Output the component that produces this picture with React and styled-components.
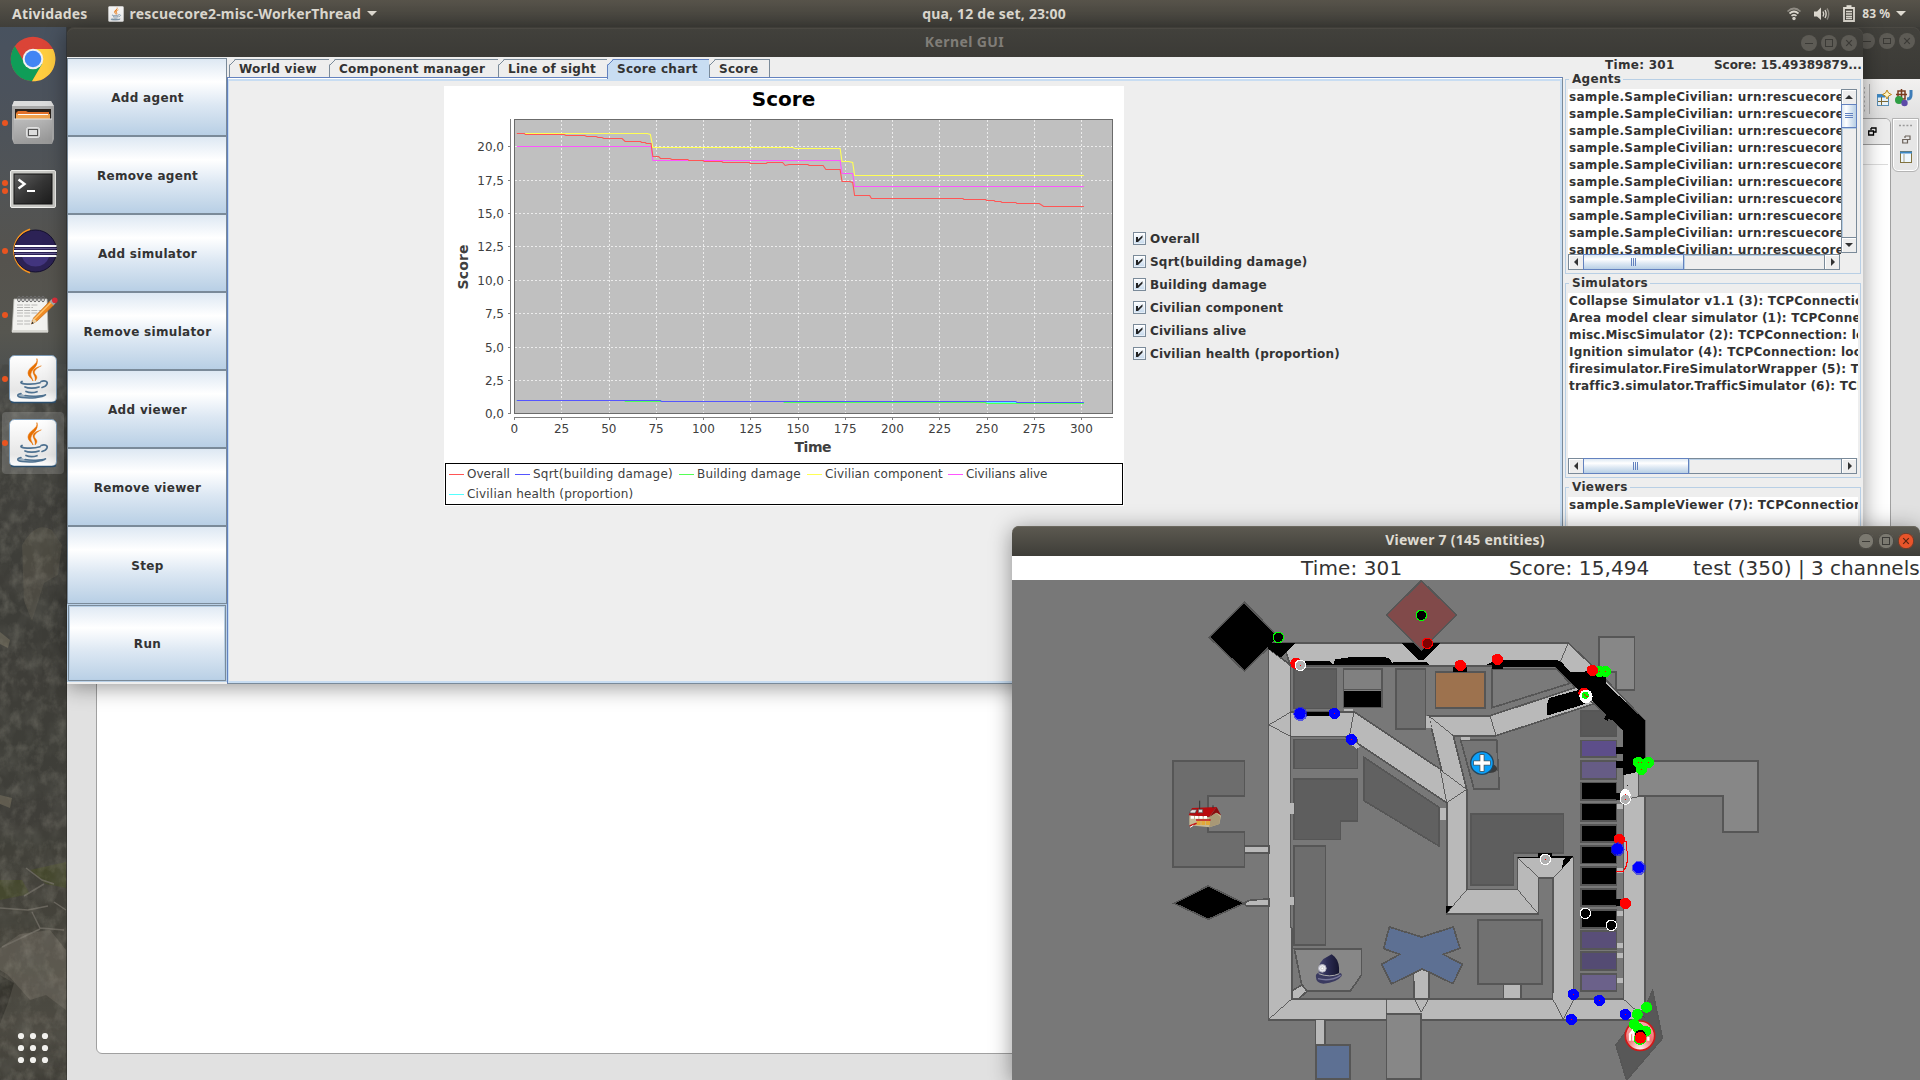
import React from "react";
import styled, { createGlobalStyle, css } from "styled-components";

const Global = createGlobalStyle`
  * { box-sizing: border-box; }
  html, body { margin: 0; padding: 0; overflow: hidden; background: #3c3b37; }
`;

const swing = `"DejaVu Sans", Verdana, sans-serif`;
const shell = `"Noto Sans", "Open Sans", sans-serif`;
const metal = "linear-gradient(180deg, #dde8f3 0%, #ffffff 30%, #dde8f3 60%, #b8cfe5 100%)";
const metalSide = "linear-gradient(90deg, #dde8f3 0%, #ffffff 30%, #dde8f3 60%, #b8cfe5 100%)";

/* ---------- desktop ---------- */
const Desktop = styled.div`
  position: relative;
  width: 1920px;
  height: 1080px;
  overflow: hidden;
  display: flex;
  flex-direction: column;
  font-family: ${swing};
`;
const TopBar = styled.header`
  height: 27px;
  flex: none;
  display: grid;
  grid-template-columns: 1fr auto 1fr;
  align-items: center;
  background: linear-gradient(180deg, #57534a, #403f3a);
  color: #dfdbd2;
  font: 700 14px/27px ${shell};
  padding: 0 14px 2px 12px;
`;
const BarGroup = styled.div`
  display: flex;
  align-items: center;
  justify-content: ${(p) => (p.$end ? "flex-end" : "flex-start")};
`;
const BarText = styled.span`
  white-space: pre;
  letter-spacing: ${(p) => p.$ls ?? 0.2}px;
  margin-left: ${(p) => p.$ml || 0}px;
  font-size: ${(p) => p.$size || 14}px;
`;
const BarIcon = styled.svg`
  display: block;
  margin-left: ${(p) => p.$ml || 0}px;
`;
const Below = styled.div`
  flex: 1;
  display: flex;
`;
const Dock = styled.nav`
  position: relative;
  width: 67px;
  display: flex;
  flex-direction: column;
  background: #3e3d38;
`;
const Wallpaper = styled.svg`
  position: absolute;
  inset: 0;
`;
const DockItem = styled.div`
  position: relative;
  height: 64px;
  &::before {
    content: "";
    position: absolute;
    inset: 1px 3px 1px 2px;
    border-radius: 4px;
    background: ${(p) => (p.$active ? "rgba(255,255,255,.17)" : "transparent")};
  }
  svg { position: relative; display: block; }
`;
const DockSpacer = styled.div`flex: 1;`;
const AppsButton = styled.div`
  position: relative;
  height: 58px;
`;
const Workspace = styled.div`
  position: relative;
  flex: 1;
`;

/* ---------- windows ---------- */
const Window = styled.section`
  position: absolute;
  left: ${(p) => p.$x}px;
  top: ${(p) => p.$y}px;
  width: ${(p) => p.$w}px;
  height: ${(p) => p.$h}px;
  display: flex;
  flex-direction: column;
  border-radius: 7px 7px 0 0;
  box-shadow: ${(p) => (p.$shadow ? "0 3px 22px rgba(0,0,0,.42)" : "none")};
`;
const TitleBar = styled.div`
  height: ${(p) => p.$h}px;
  flex: none;
  display: flex;
  align-items: center;
  justify-content: flex-end;
  position: relative;
  padding-right: ${(p) => p.$pr}px;
  padding-bottom: ${(p) => p.$pb || 0}px;
  gap: 4px;
  border-radius: 7px 7px 0 0;
  background: ${(p) => (p.$focused ? "linear-gradient(180deg,#5d5a51,#3e3d38)" : "linear-gradient(180deg,#42413c,#3b3a36)")};
  box-shadow: inset 0 1px 0 ${(p) => (p.$focused ? "#6a675e" : "#4b4943")};
`;
const TitleText = styled.h1`
  flex: 1;
  margin: 0;
  padding-left: ${(p) => p.$pad}px;
  text-align: center;
  font: 700 14px/28px ${shell};
  padding-bottom: 2px;
  letter-spacing: ${(p) => p.$ls || 0}px;
  color: ${(p) => (p.$focused ? "#dfdbd2" : "#807d78")};
`;

/* ---------- IDE window in the background ---------- */
const IdeBody = styled.div`
  flex: 1;
  display: flex;
  flex-direction: column;
  background: #e1e1e1;
`;
const IdeToolbar = styled.div`
  height: 39px;
  display: flex;
  justify-content: flex-end;
  align-items: center;
  padding: 1px 7px 0 0;
  background: linear-gradient(180deg, #f2f1f0, #e1e1e1);
`;
const IdeRow = styled.div`
  flex: 1;
  display: flex;
  padding: 0 1px 26px 29px;
`;
const Editor = styled.div`
  width: 1795px;
  border: 1px solid #a0a0a0;
  border-radius: 6px;
  background: #fff;
  overflow: hidden;
`;
const EditorTabs = styled.div`
  height: 26px;
  display: flex;
  justify-content: flex-end;
  padding: 8px 13px 0 0;
  border-bottom: 1px solid #a0a0a0;
  background: #ececec;
`;
const EditorRule = styled.div`
  height: 20px;
  margin-right: 2px;
  border-bottom: 1px solid #dcdcdc;
`;
const TrimStack = styled.div`
  width: 27px;
  height: 54px;
  margin-left: 1px;
  border: 1px solid #b4b4b4;
  border-radius: 0 0 6px 6px;
  box-shadow: inset 0 0 0 1px #fff;
  background: #e6e6e6;
`;

/* ---------- kernel window ---------- */
const KernelBody = styled.div`
  flex: 1;
  display: flex;
  background: #eeeeee;
  color: #333333;
  font: 700 12px/17px ${swing};
`;
const ButtonColumn = styled.div`
  width: 160px;
  padding-top: 1px;
  display: flex;
  flex-direction: column;
`;
const SwingButton = styled.button`
  height: 78px;
  padding: 2px 0 0 1px;
  border: 1px solid #7a8a99;
  background: ${metal};
  color: #333;
  font: 700 12px/14px ${swing};
  letter-spacing: 0.32px;
  ${(p) => p.$focus && css`
    border-color: #b8cfe5;
    box-shadow: inset 0 0 0 1px #7a8a99, inset 0 0 0 2px #b8cfe5;
  `}
`;
const TabbedPane = styled.div`
  width: 1336px;
  display: flex;
  flex-direction: column;
`;
const TabStrip = styled.div`
  position: relative;
  z-index: 1;
  height: 20px;
  padding: 2px 0 0 2px;
  display: flex;
`;
const TabCell = styled.div`
  width: ${(p) => p.$w}px;
  height: ${(p) => (p.$on ? 20 : 18)}px;
  padding-left: 9px;
  line-height: 18px;
  letter-spacing: 0.28px;
  white-space: pre;
  border-top: 1px solid ${(p) => (p.$on ? "#6382bf" : "#7a8a99")};
  border-left: 1px solid ${(p) => (p.$on ? "#6382bf" : "#7a8a99")};
  background: linear-gradient(135deg, transparent 3px, ${(p) => (p.$on ? "#6382bf" : "#7a8a99")} 3px 4px, transparent 4px) 0 0 / 6px 6px no-repeat,
    ${(p) => (p.$on ? "#c8ddf2" : "#eeeeee")};
  clip-path: polygon(0 6px, 6px 0, 100% 0, 100% 100%, 0 100%);
  &:last-child { border-right: 1px solid #7a8a99; }
`;
const Pane = styled.div`
  flex: 1;
  display: flex;
  align-items: flex-start;
  border: 1px solid #6382bf;
  border-bottom-color: #7a8a99;
  border-right-color: #7a8a99;
  box-shadow: inset 0 1px 0 #fff, inset 0 3px 0 #c8ddf2, inset 1px 0 0 #c8ddf2, inset -2px -2px 0 #c8ddf2;
  padding: 8px 0 0 216px;
`;
const ChartCard = styled.div`
  width: 680px;
  height: 420px;
  background: #fff;
  display: flex;
  flex-direction: column;
  padding: 0 1px 1px;
`;
const ChartSvg = styled.svg`
  display: block;
  flex: none;
  margin-left: -1px;
`;
const Legend = styled.div`
  height: 42px;
  border: 1px solid #000;
  display: flex;
  flex-wrap: wrap;
  align-content: flex-start;
  padding-left: 3px;
`;
const LegendItem = styled.span`
  display: flex;
  align-items: center;
  width: ${(p) => p.$w}px;
  height: 20px;
  font: 400 12px/20px ${swing};
  letter-spacing: ${(p) => p.$ls}px;
  color: #404040;
  white-space: pre;
  &::before {
    content: "";
    width: 15px;
    height: 1px;
    margin-right: 3px;
    background: ${(p) => p.$c};
  }
`;
const CheckList = styled.div`
  display: flex;
  flex-direction: column;
  padding: 141px 0 0 9px;
`;
const CheckRow = styled.label`
  height: 23px;
  display: flex;
  align-items: center;
  gap: 4px;
  letter-spacing: 0.2px;
`;
const CheckText = styled.span`padding-top: 1px;`;
const CheckBox = styled.span`
  width: 13px;
  height: 13px;
  border: 1px solid #7a8a99;
  background: linear-gradient(180deg, #fff, #c4d8ec);
  box-shadow: inset 0 0 0 1px #fff8;
  svg { display: block; }
`;
const Side = styled.aside`
  width: 300px;
  padding: 0 2px;
  display: flex;
  flex-direction: column;
`;
const StatusRow = styled.div`
  height: 14px;
  display: flex;
  padding-left: 40px;
  line-height: 16px;
`;
const Status = styled.span`
  flex: none;
  width: ${(p) => p.$w}px;
  letter-spacing: ${(p) => p.$ls}px;
  white-space: nowrap;
`;
const Titled = styled.fieldset`
  margin: 0 0 ${(p) => p.$mb || 0}px;
  height: ${(p) => p.$h}px;
  min-width: 0;
  padding: 0 2px;
  border: 1px solid #b8cfe5;
  ${(p) => p.$open && css`border-bottom: 0;`}
`;
const Legendary = styled.legend`
  padding: 0 2px 0 3px;
  margin-left: 1px;
  height: 17px;
  line-height: 17px;
  letter-spacing: 0.3px;
`;
const ScrollGrid = styled.div`
  display: grid;
  grid-template-columns: ${(p) => (p.$v ? "273px 17px" : "290px")};
  grid-template-rows: ${(p) => p.$rows};
  margin-top: 1px;
`;
const List = styled.div`
  background: #fff;
  overflow: hidden;
  padding-left: 1px;
`;
const ListRow = styled.div`
  height: 17px;
  line-height: 17px;
  white-space: pre;
  letter-spacing: ${(p) => p.$ls ?? 0.2}px;
`;
const Bar = styled.div`
  display: flex;
  flex-direction: ${(p) => (p.$v ? "column" : "row")};
  ${(p) => (p.$v ? "width:16px;" : "height:16px;")}
  border: 1px solid #7a8a99;
  background: #eee;
  margin: ${(p) => (p.$v ? "0 0 1px 0" : "0 1px 0 0")};
`;
const ArrowBox = styled.div`
  width: ${(p) => (p.$v || !p.$end ? 14 : 15)}px;
  height: ${(p) => (p.$v && p.$end ? 15 : 14)}px;
  flex: none;
  box-shadow: inset 1px 1px 0 #fff;
  ${(p) => p.$end && (p.$v ? "border-top:1px solid #7a8a99;" : "border-left:1px solid #7a8a99;")}
  display: flex;
  align-items: center;
  justify-content: center;
`;
const Thumb = styled.div`
  flex: none;
  width: ${(p) => (p.$v ? "16px" : p.$len + "px")};
  height: ${(p) => (p.$v ? p.$len + "px" : "16px")};
  margin: ${(p) => (p.$v ? "0 -1px" : "-1px 0")};
  border: 1px solid #6382bf;
  background: ${(p) => (p.$v ? metalSide : metal)};
  display: flex;
  align-items: center;
  justify-content: center;
`;
const Track = styled.div`
  flex: 1;
  box-shadow: inset 1px 1px 0 #b8cfe5;
`;

/* ---------- viewer window ---------- */
const ViewerLabels = styled.div`
  height: 24px;
  flex: none;
  display: flex;
  background: #fff;
  color: #333;
  font: 400 20px/25px ${swing};
  padding-left: 289px;
`;
const ViewerLabel = styled.span`
  width: ${(p) => p.$w}px;
  flex: none;
  white-space: pre;
  letter-spacing: ${(p) => p.$ls || 0}px;
`;
const MapSvg = styled.svg`
  display: block;
  flex: none;
  background: #787878;
`;

/* ---------- window controls ---------- */
function Control({ kind, tone }) {
  const fill = tone === "close" ? "#e9542a" : tone === "live" ? "#7b7970" : "#5d5b55";
  const ink = tone === "close" ? "#5a2412" : "#3b3a36";
  return (
    <svg width="16" height="16" viewBox="0 0 16 16">
      <circle cx="8" cy="8" r="8" fill={fill} />
      {tone !== undefined && <circle cx="8" cy="8" r="7.7" fill="none" stroke="#33322e" strokeWidth=".7" />}
      {kind === "min" && <path d="M4 8.5H12" stroke={ink} strokeWidth="1" />}
      {kind === "max" && <rect x="4.5" y="4.5" width="7" height="7" fill="none" stroke={ink} />}
      {kind === "wide" && <rect x="4.5" y="5.5" width="7" height="5" fill="none" stroke={ink} />}
      {kind === "close" && <path d="M5.2 5.2L10.8 10.8M10.8 5.2L5.2 10.8" stroke={ink} strokeWidth="1.2" />}
    </svg>
  );
}

/* ---------- dock icons ---------- */
const dot = (y) => <circle key={y} cx="5" cy={y} r="3" fill="#e95420" />;
const Slot = ({ dots = [], children }) => (
  <svg width="67" height="64" viewBox="0 0 67 64">
    {dots.map(dot)}
    {children}
  </svg>
);
const JavaCup = () => (
  <g fill="none" strokeLinecap="round">
    <path d="M37 12c2 5-9 8-9 14 0 4 4 5 5 8-1-4-3-5-2-8 1-4 8-7 6-14z" fill="#e76f00" stroke="#e76f00" strokeWidth=".6" />
    <path d="M41 19c-4 1-8 3-8 6 0 3 3 4 2 9 3-3 2-5 0-7-2-3 2-6 6-8z" fill="#e76f00" stroke="#e76f00" strokeWidth=".4" />
    <path d="M22 34.500c-2 1-1 2 2 2.300 6 .7 12 .3 16-1M25 40c3 1.500 10 1.500 14 0M26 44.500c3 1.300 8 1.300 11 .2M41 34.500c4-1.500 7 0 6 2.500-.7 2-3 3-5 3.500" stroke="#4e7190" strokeWidth="1.700" />
    <path d="M21 46.500c-5 1-4 3.500 1 4 8 1 20 .5 24-3-1 1-12 2.500-21 1" stroke="#4e7190" strokeWidth="1.500" fill="#4e7190" fillOpacity=".5" />
  </g>
);
const JavaTile = () => (
  <Slot dots={[32]}>
    <rect x="9.500" y="8.500" width="47" height="47" rx="5" fill="url(#tile)" stroke="#7d9cb8" />
    <path d="M11 54.500q.8 1 3 1h38q3 0 4-1" stroke="#2c4f6e" fill="none" strokeWidth="1.300" />
    <defs>
      <linearGradient id="tile" x1="0" y1="0" x2="0" y2="1">
        <stop offset="0" stopColor="#fff" />
        <stop offset=".75" stopColor="#e6e6e6" />
        <stop offset="1" stopColor="#fff" />
      </linearGradient>
    </defs>
    <JavaCup />
  </Slot>
);
const Chrome = () => (
  <Slot>
    <circle cx="33" cy="32" r="22.300" fill="#db4437" />
    <path d="M33 32L14.800 19A22.300 22.300 0 0 0 32 54.300L43 37z" fill="#0f9d58" />
    <path d="M33 22H53A22.300 22.300 0 0 1 32 54.300L42 37z" fill="#ffcd40" />
    <path d="M14.800 19L24 35 33 22z" fill="#db4437" />
    <circle cx="33" cy="32" r="10.300" fill="#f1f1f1" />
    <circle cx="33" cy="32" r="8.300" fill="#4285f4" />
  </Slot>
);
const Files = () => (
  <Slot dots={[32]}>
    <path d="M14 10h37l3 5v33l-2 5H14l-2-5V15z" fill="#a9a9a9" />
    <path d="M14 10h37l3 5H12z" fill="#dcdcdc" />
    <rect x="15" y="18" width="36" height="12" fill="#2b221c" />
    <path d="M16 22l2-2h8l2 1h21v8H16z" fill="#e2712a" />
    <path d="M16 23h34v5H16z" fill="#f0a24e" />
    <path d="M18 23.500h30" stroke="#fff" />
    <path d="M14 28h38v25H14z" fill="url(#cab)" />
    <path d="M14 28h38" stroke="#e4e4e4" />
    <rect x="26.500" y="36.500" width="13" height="10" rx="2" fill="#c9c9c9" stroke="#e2e2e2" />
    <rect x="28.500" y="38.500" width="9" height="6" fill="#ddd" stroke="#555" />
    <defs>
      <linearGradient id="cab" x1="0" y1="0" x2=".3" y2="1">
        <stop offset="0" stopColor="#bcbcbc" />
        <stop offset="1" stopColor="#9a9a9a" />
      </linearGradient>
    </defs>
  </Slot>
);
const Terminal = () => (
  <Slot dots={[28, 36]}>
    <rect x="10.500" y="15.500" width="45" height="37" rx="1.500" fill="#c9c9c5" stroke="#efefec" />
    <rect x="14" y="19" width="38" height="30" fill="url(#crt)" stroke="#151515" />
    <path d="M18.500 24.500l6 4.500-6 4.500" stroke="#fff" strokeWidth="2.400" fill="none" />
    <path d="M27 36h8" stroke="#fff" strokeWidth="2" />
    <defs>
      <linearGradient id="crt" x1="0" y1="0" x2="1" y2="1">
        <stop offset="0" stopColor="#5e5e5e" />
        <stop offset=".5" stopColor="#363636" />
        <stop offset="1" stopColor="#1c1c1c" />
      </linearGradient>
    </defs>
  </Slot>
);
const Eclipse = () => (
  <Slot dots={[32]}>
    <path d="M30 10.500A22.500 22.500 0 0 0 30 53.500 25 25 0 0 1 30 10.500z" fill="#f7941e" stroke="#f7941e" strokeWidth="2" />
    <circle cx="35.500" cy="32" r="21" fill="#2c2255" stroke="#15102f" />
    <path d="M22 38h27a14 13 0 0 1-27 0z" fill="#42357e" />
    <path d="M15 27H56.500M14 32H57M15 37H56.500" stroke="#fff" strokeWidth="2" />
    <path d="M14 29.500H57M14 34.500H57" stroke="#7a70a8" strokeWidth=".7" />
  </Slot>
);
const Notes = () => (
  <Slot dots={[32]}>
    <path d="M14 16h33l1 33H12z" fill="#f3f3f0" stroke="#b9b9b4" strokeWidth=".8" />
    <path d="M12 47h36v2.500H12z" fill="#d8d8d2" />
    {[0, 1, 2, 3, 4, 5, 6].map((i) => (
      <ellipse key={i} cx={19 + i * 4} cy="16" rx="1.400" ry="2.900" fill="none" stroke="#6d6d6d" strokeWidth="1" />
    ))}
    <path d="M17 22h21M17 24.500h16M17 27.500h24M17 30h22M17 33h14M17 38h20M17 41h14" stroke="#b8b8b6" strokeWidth="1" strokeDasharray="6 1.200" />
    <path d="M31.500 41l2-6L50 18l4 4-17 16z" fill="#f08b24" stroke="#b9600e" strokeWidth=".6" />
    <path d="M34 36.500L51 19.500" stroke="#ffc46b" strokeWidth="1.400" />
    <path d="M31.500 41l2-5.500 3.500 2.700z" fill="#e9d1a4" />
    <path d="M31.300 41.300l1-2.500 1.500 1.500z" fill="#222" />
    <path d="M49.500 18.500l2-2.200 4 4-2 2.200z" fill="#aaa" />
    <circle cx="54.800" cy="17.300" r="2.800" fill="#de2f3c" />
  </Slot>
);
const Apps = () => (
  <svg width="67" height="58" viewBox="0 0 67 58">
    {[14, 26, 38].map((y) => [21, 33, 45].map((x) => <circle key={x + "-" + y} cx={x} cy={y} r="3.100" fill="#f2f1ee" />))}
  </svg>
);
const Rocks = () => (
  <Wallpaper width="67" height="1053" viewBox="0 27 67 1053">
    <defs>
      <linearGradient id="sky" x1="0" y1="0" x2="0" y2="1">
        <stop offset="0" stopColor="#48525f" />
        <stop offset=".06" stopColor="#4b525c" />
        <stop offset=".15" stopColor="#515456" />
        <stop offset=".22" stopColor="#55534e" />
        <stop offset=".29" stopColor="#565650" />
        <stop offset=".33" stopColor="#4d504f" />
        <stop offset=".38" stopColor="#43433f" />
        <stop offset=".55" stopColor="#3d3c37" />
        <stop offset=".75" stopColor="#403f39" />
        <stop offset=".85" stopColor="#49463c" />
        <stop offset=".95" stopColor="#565248" />
        <stop offset="1" stopColor="#423f37" />
      </linearGradient>
      <filter id="grain" x="0" y="0" width="1" height="1">
        <feTurbulence type="fractalNoise" baseFrequency="0.09 0.07" numOctaves="4" seed="8" />
        <feColorMatrix values="0 0 0 0 .5  0 0 0 0 .48  0 0 0 0 .4  1.900 0 0 0 -.85" />
      </filter>
      <filter id="shade" x="0" y="0" width="1" height="1">
        <feTurbulence type="fractalNoise" baseFrequency="0.06 0.04" numOctaves="4" seed="3" />
        <feColorMatrix values="0 0 0 0 .13  0 0 0 0 .13  0 0 0 0 .11  0 2 0 0 -.8" />
      </filter>
    </defs>
    <rect y="27" width="67" height="1053" fill="url(#sky)" />
    <path d="M0 364L28 366 42 380 52 374 67 390V1080H0z" fill="#3f3e39" opacity=".4" />
    <path d="M22 545q14-25 30-15l10 15-4 30-14 8-12 38-8-20z" fill="#5a564b" opacity=".55" />
    <path d="M0 632l10 8-2 8-8-4zM0 795l12 3-2 10-10-4z" fill="#77705e" opacity=".6" />
    <path d="M0 880h22l8 14-30 6zM30 870l36-8v26l-20-4z" fill="#474d26" opacity=".6" />
    <path d="M0 948l20-14 30-4 16 20v60l-20-15-16 5L8 975l-8-5z" fill="#6a665b" opacity=".6" />
    <path d="M26 868l16 12 12 4M24 896l20-12M0 908l28 2 20-4M32 912l8 16 24 2M54 902l12 8M2 947l38-18" stroke="#77746b" strokeWidth="1.500" fill="none" opacity=".7" />
    <path d="M0 975l14 8-6 20L0 1024z" fill="#2d2c27" opacity=".7" />
    <rect y="364" width="67" height="716" filter="url(#grain)" opacity=".26" />
    <rect y="364" width="67" height="716" filter="url(#shade)" opacity=".35" />
    <path d="M66.500 27V1080" stroke="#2e2d29" opacity=".5" />
  </Wallpaper>
);

/* ---------- scrollbars ---------- */
const tri = { up: "M0 6h8L4 2z", down: "M0 2h8L4 6z", left: "M6 0v8L2 4z", right: "M3 0v8l4-4z" };
const Arrow = ({ dir }) => (
  <svg width="8" height="8" viewBox="0 0 8 8"><path d={tri[dir]} fill="#333" /></svg>
);
function ScrollBar({ v, len }) {
  return (
    <Bar $v={v}>
      <ArrowBox $v={v}><Arrow dir={v ? "up" : "left"} /></ArrowBox>
      <Thumb $v={v} $len={len}>
        <svg width="8" height="8" viewBox="0 0 8 8" shapeRendering="crispEdges">
          <path d={v ? "M0 1.500h8M0 3.500h8M0 5.500h8" : "M1.500 0v8M3.500 0v8M5.500 0v8"} stroke="#6382bf" />
        </svg>
      </Thumb>
      <Track />
      <ArrowBox $v={v} $end><Arrow dir={v ? "down" : "right"} /></ArrowBox>
    </Bar>
  );
}

/* ---------- chart ---------- */
const px = (t) => 70.3 + t * 1.8905;
const steps = {
  alive: [[1, 146], [72, 146], [73, 160], [172, 160], [173, 173], [178.7, 173], [179.7, 186], [301, 186]],
  component: [[1, 133], [70, 133], [71.700, 134], [73, 147], [147, 147], [148, 148], [172, 148], [173, 161], [176.500, 161], [178.700, 162], [179.700, 175], [301, 175]],
  overall: [[1, 133], [5, 133], [5.500, 134], [26, 134], [27, 135], [37, 135], [38, 136], [43, 136], [44, 137], [46, 137], [47, 138], [56.700, 138], [58.300, 141], [66.500, 141], [67, 142], [69, 142], [69.500, 143], [72, 143], [73, 156], [76, 156], [77, 158], [82, 158], [83, 159], [91.500, 159], [92, 160], [99.500, 160], [100, 161], [109.500, 161], [110, 162], [124, 162], [124.500, 163], [133, 163], [133.500, 162], [141.600, 162], [143, 165], [145, 164], [155, 164], [155.600, 165], [163, 165], [164.500, 169], [172, 169], [173, 181], [177, 181], [178.700, 182], [179.700, 195], [187.700, 195], [188.600, 198], [237, 198], [237.500, 199], [249, 199], [249.500, 200], [253.500, 200], [254, 201], [257, 201], [257.600, 202], [265, 202], [265.500, 203], [277.400, 203], [279.700, 206], [301, 206]],
  health: [[1, 400], [77, 400], [77.500, 401], [249, 401], [250, 402], [301, 402]],
  building: [[1, 400], [58, 400], [58.500, 401], [142, 401], [142.500, 402], [249, 402], [249.500, 403], [301, 403]],
  sqrt: [[1, 400], [77, 400], [77.500, 401], [265, 401], [265.500, 402], [301, 402]],
};
const toPoints = (s) => s.map(([t, y]) => `${(px(t) + 0.6).toFixed(1)},${y - 86 + 0.5}`).join(" ");
const yTicks = [["20,0", 146], ["17,5", 180], ["15,0", 213], ["12,5", 246], ["10,0", 280], ["7,5", 313], ["5,0", 347], ["2,5", 380], ["0,0", 413]];
const series = [["health", "#55ffff"], ["alive", "#ff55ff"], ["component", "#ffff55"], ["building", "#55ff55"], ["sqrt", "#5555ff"], ["overall", "#ff5555"]];

function Chart() {
  const xt = Array.from({ length: 13 }, (_, i) => i * 25);
  return (
    <ChartSvg width="680" height="377" viewBox="0 0 680 377" fontFamily="DejaVu Sans" fontWeight="400" fill="#404040">
      <text x="339.500" y="20" fontSize="20" fontWeight="700" fill="#000" textAnchor="middle">Score</text>
      <rect x="70.500" y="33.500" width="598" height="294" fill="#c0c0c0" stroke="#6b6b6b" />
      <g stroke="#fff" strokeDasharray="2 2" opacity=".7" shapeRendering="crispEdges">
        {xt.slice(1).map((t) => <path key={t} d={`M${Math.round(px(t) - 0.3) + 0.5} 34V327`} />)}
        {yTicks.slice(0, 8).map(([l, y]) => <path key={l} d={`M71 ${y - 85.5}H668`} />)}
      </g>
      <g stroke="#808080" shapeRendering="crispEdges">
        <path d="M66.500 33V328M70 331.500H669" />
        {xt.map((t) => <path key={t} d={`M${Math.round(px(t) - 0.3) + 0.5} 332v2`} />)}
        {yTicks.map(([l, y]) => <path key={l} d={`M64 ${y - 85.5}h2`} />)}
      </g>
      {series.map(([k, c]) => <polyline key={k} points={toPoints(steps[k])} fill="none" stroke={c} strokeWidth="1.100" />)}
      <g fontSize="12">
        {yTicks.map(([l, y]) => <text key={l} x="60" y={y - 81} textAnchor="end">{l}</text>)}
        {xt.map((t) => <text key={t} x={px(t)} y="347" textAnchor="middle">{t}</text>)}
      </g>
      <text x="369" y="365.500" fontSize="14" fontWeight="700" textAnchor="middle" textLength="37">Time</text>
      <text transform="translate(24 181) rotate(-90)" fontSize="14" fontWeight="700" textAnchor="middle" textLength="45">Score</text>
    </ChartSvg>
  );
}

/* ---------- city map: three drawing units per screen pixel ---------- */
const rect = (x1, y1, x2, y2, fill) => ({ d: `M${x1} ${y1}H${x2}V${y2}H${x1}z`, fill });
const roads = [
  "M355 235L421 285V1070L425 1075V1287H1420V480L1330 400 1286 362 1214 288H421L400 219H1255L1330 290 1485 452V1350H355z",
  "M421 425H612L875 600 835 437H1020L1285 350 1330 402 1038 497H910L950 658V958H1102V862H1270V1287H1208V924H1165V1032H890V698L622 520 597 505 585 499H421z",
];
const buildings = [
  { d: "M283 97L387 202 283 303 178 202z", fill: "#000" },
  { d: "M1347 201H1453V359H1398V305H1347z", fill: "#878787" },
  rect(431, 296, 559, 415, "#5e5e5e"),
  rect(580, 296, 696, 412, "#808080"),
  rect(738, 296, 826, 477, "#6f6f6f"),
  rect(856, 306, 1005, 413, "#9d724e"),
  { d: "M1026 296H1220L1260 340 1026 413z", fill: "#7a7a7a" },
  rect(431, 508, 622, 595, "#626262"),
  { d: "M431 626H622V753H571V808H431z", fill: "#5e5e5e" },
  { d: "M642 562L867 712V828L642 692z", fill: "#616161" },
  { d: "M932 510H1040L1048 657H972z", fill: "#757575" },
  { d: "M68 573H283V678H174V786H283V891H68z", fill: "#6d6d6d" },
  rect(431, 827, 526, 1125, "#6d6d6d"),
  { d: "M175 948L283 1000 175 1048 72 1000z", fill: "#000" },
  { d: "M433 1137H634V1215L602 1262H470L455 1243z", fill: "#878787" },
  { d: "M718 1071L815 1101 910 1071 930 1135 880 1153 937 1183 909 1241 817 1197 724 1242 695 1183 749 1153 701 1136z", fill: "#5d7093" },
  rect(984, 1049, 1176, 1241, "#717171"),
  { d: "M962 731H1240V849H1090V945H962z", fill: "#5e5e5e" },
  rect(497, 1425, 600, 1527, "#5d7093"),
  rect(709, 1331, 813, 1527, "#878787"),
  { d: "M1465 573H1824V786H1719V678H1465z", fill: "#878787" },
  { d: "M1508 1263L1537 1405 1430 1530 1398 1425 1485 1310z", fill: "#585858" },
  rect(1293, 422, 1399, 498, "#585858"),
  rect(1293, 511, 1399, 561, "#5d4e8a"),
  rect(1293, 573, 1399, 626, "#665c85"),
  ...[[637, 689], [700, 752], [765, 815], [828, 880], [891, 944], [956, 1007], [1020, 1073]].map(([a, b]) => rect(1293, a, 1399, b, "#000")),
  rect(1293, 1083, 1399, 1137, "#594e78"),
  rect(1293, 1146, 1399, 1200, "#544b73"),
  rect(1293, 1211, 1399, 1263, "#6b618a"),
];
const stubs = [
  "M283 827H356V849H283z", "M278 1000L303 990 356 987V1007H290z", "M425 1263L455 1245 472 1263 445 1287H425z",
  "M790 1206L816 1197 836 1206V1287H793z", "M1060 1243H1113V1287H1060z", "M496 1348H525V1425H496z",
];
const openings = [
  "M421 700h11v31h-11z", "M421 982h11v22h-11z", "M870 714h18v36h-18z", "M582 416h28v8h-28z", "M932 500h28v9h-28z", "M829 438h8l8 36h-16z",
  "M1401 703h19v14h-19z", "M1401 895h19v14h-19z", "M1401 1023h19v16h-19z", "M1401 1119h19v14h-19z", "M1401 1149h19v15h-19z", "M1401 1223h19v16h-19z",
  "M605 525L620 536 630 530 620 518z",
];
const blockades = [
  "M353 219H435L393 263 353 235z", "M754 219H872L822 270H806z", "M550 284L556 268 598 262H705L718 266 730 284z",
  "M465 273H540L548 284H465z", "M728 277H830L840 286H728z", "M1008 286L1025 276V272L1057 270H1220L1235 277 1262 307 1330 303 1367 320V340L1485 452V570L1455 608 1420 615 1418 480 1390 452 1375 446 1372 453 1362 446 1368 435 1333 398 1288 362 1217 291H1060V297H1026V286z",
  "M909 290H951V305H909z", "M1191 437V402L1198 384 1285 360 1305 402z", "M468 426H540V437H468z",
  "M582 362H693V411H582z", "M888 1008H910L888 1030z", "M1101 860H1165V849H1205V857H1272L1237 895 1238 875 1246 864H1101z",
  "M1398 531h22v21h-22z", "M1398 573h22v21h-22z", "M1398 670h22v20h-22z", "M1398 987h22v21h-22z",
];
const seams = "M356 465L421 427M356 465L421 498M421 425V498M356 1348L425 1287M393 263L425 285M612 425L597 505M835 437L910 497M1020 437L1038 497M871 600L950 658M890 698L950 658M871 597L890 698M951 958L890 1030M1102 958L1165 1032M1102 862L1165 922M1208 924L1240 893M1255 219L1231 275M709 1287V1331M793 1287L814 1327 836 1287M1208 1287L1240 1348 1272 1287M1420 1287L1485 1345M1440 685L1466 680";
const agents = [
  ["red", 438, 280], ["ring", 451, 286], ["ash", 385, 202], ["ash", 814, 136], ["hurt", 832, 220], ["red", 931, 286], ["red", 1042, 268],
  ["green", 1348, 304], ["green", 1366, 304], ["red", 1327, 301], ["red", 1302, 370],
  ["halo", 450, 431], ["blue", 553, 430], ["blue", 604, 508],
  ["green", 1465, 577], ["green", 1495, 577], ["green", 1474, 598], ["red", 1408, 808], ["halo", 1402, 837], ["halo", 1466, 893],
  ["ring", 1186, 868], ["red", 1426, 1000], ["dead", 1306, 1030], ["dead", 1384, 1066],
  ["blue", 1270, 1273], ["blue", 1348, 1291], ["blue", 1264, 1348], ["blue", 1426, 1333],
];
const look = {
  red: ["#f00"], green: ["#0f0"], blue: ["#00f"], halo: ["#00f"], hurt: ["#800000", "#f00"], ash: ["#000", "#0f0"], ring: ["#b0b0b0", "#fff"], dead: ["#000", "#fff"],
};
function Agent({ k, x, y }) {
  const [fill, ring] = look[k];
  return (
    <g>
      {k === "halo" && <circle cx={x + 1} cy={y + 1} r="21" fill="#2020f0" opacity=".65" />}
      <circle cx={x} cy={y} r={ring ? 15.5 : 17} fill={fill} stroke={ring} strokeWidth={ring ? 3.4 : 0} />
      {(k === "blue" || k === "ring") && <rect x={x - 1} y={y - 1} width="3" height="3" fill="#f00" />}
    </g>
  );
}
function CityMap() {
  return (
    <MapSvg width="908" height="500" viewBox="-414 30 2724 1500">
      <defs>
        <linearGradient id="helmet" x1="0" y1="0" x2="1" y2="0">
          <stop offset="0" stopColor="#4c4c74" /><stop offset=".4" stopColor="#2d2d55" /><stop offset="1" stopColor="#15152f" />
        </linearGradient>
        <radialGradient id="refuge" cx=".5" cy="1" r="1">
          <stop offset="0" stopColor="#fff" /><stop offset=".5" stopColor="#f07070" /><stop offset="1" stopColor="#f8b0b0" />
        </radialGradient>
      </defs>
      <g shapeRendering="crispEdges" stroke="#565656" strokeWidth="5">
        {roads.map((d) => <path key={d} d={d} fill="#b9b9b9" />)}
        {stubs.map((d) => <path key={d} d={d} fill="#b9b9b9" />)}
        {buildings.map((b) => <path key={b.d} d={b.d} fill={b.fill} />)}
        <path d="M580 358H693" strokeWidth="3" />
      </g>
      <g shapeRendering="crispEdges" fill="#b9b9b9">
        <path d="M416 428H440V496H416zM1210 1270H1268V1292H1210zM1422 618H1462V700H1422zM853 588L872 600 868 640 800 640z" />
        {openings.map((d) => <path key={d} d={d} />)}
      </g>
      <g shapeRendering="crispEdges" fill="#000">{blockades.map((d) => <path key={d} d={d} />)}</g>
      <path d={seams} stroke="#4a4a4a" strokeWidth="2.500" fill="none" shapeRendering="crispEdges" />
      <path d="M814 32L920 135 814 240 710 135z" fill="#814a4a" stroke="#565656" strokeWidth="5" shapeRendering="crispEdges" />
      <path d="M1408 808L1430 815V840L1434 855 1433 870 1428 890 1420 904H1398" stroke="#f00" strokeWidth="3" fill="none" shapeRendering="crispEdges" />

      {/* refuge, hospital, fire station, police office */}
      <circle cx="1470" cy="1397" r="44" fill="url(#refuge)" stroke="#d01818" strokeWidth="5" />
      <path d="M1438 1395L1450 1380V1412M1440 1412V1395M1495 1400V1412" stroke="#fff" strokeWidth="7" fill="none" />
      <ellipse cx="1010" cy="592" rx="32" ry="16" fill="#3c3c3c" transform="rotate(12 1010 592)" />
      <circle cx="996" cy="579" r="34" fill="#0aa0fa" stroke="#24475e" strokeWidth="4" />
      <path d="M996 553V605M970 579H1022" stroke="#555" strokeWidth="15" />
      <path d="M996 555V603M972 579H1020" stroke="#fff" strokeWidth="10" />
      <g>
        <path d="M118 735L178 742 200 714 213 738 208 762 178 772 118 766z" fill="#c6b994" />
        <path d="M126 714L200 711 178 740 116 736z" fill="#b80a0e" />
        <path d="M178 742L200 711 213 736 200 728z" fill="#8a0d10" />
        <path d="M178 742V772L208 762 211 740 198 728z" fill="#a89876" />
        <path d="M149 692V722M189 706V714" stroke="#333" strokeWidth="3" />
        <path d="M122 742H174" stroke="#fff" strokeWidth="8" strokeDasharray="10 3" />
        <path d="M140 759H180" stroke="#e2a93a" strokeWidth="12" strokeDasharray="12 2" />
        <path d="M120 724L126 719H140L136 729H120zM145 718H158V728H145z" fill="#ddd" stroke="#444" strokeWidth="2" />
        <path d="M138 750H182M119 768L140 760" stroke="#c41616" strokeWidth="5" />
        <path d="M120 772L130 766" stroke="#fff" strokeWidth="3" />
      </g>
      <g>
        <path d="M498 1222Q495 1210 508 1208L560 1211Q577 1205 575 1218 560 1238 520 1241 498 1240 498 1222z" fill="#3a3a60" />
        <path d="M504 1226Q540 1236 572 1216" stroke="#77779a" strokeWidth="4" fill="none" />
        <path d="M506 1210Q504 1170 532 1160L545 1153 554 1160Q570 1176 567 1211 540 1222 506 1210z" fill="url(#helmet)" />
        <path d="M506 1211Q540 1224 568 1211" stroke="#aaa" strokeWidth="3" fill="none" />
        <circle cx="517" cy="1195" r="11.500" fill="#e8e8ee" stroke="#b0b0bc" strokeWidth="3" />
        <circle cx="517" cy="1195" r="4" fill="#fff" stroke="#888" />
      </g>

      <g shapeRendering="crispEdges">
        {agents.map(([k, x, y]) => <Agent key={x + "/" + y} k={k} x={x} y={y} />)}
        <circle cx="1308" cy="379" r="20" fill="#fff" />
        <circle cx="1306" cy="376" r="10.500" fill="#0f0" />
        <path d="M1302 372L1312 381M1348 303V306M1366 303V306M1465 576V579M1474 576V579M1495 576V579M1474 598V601" stroke="#f00" strokeWidth="3" />
        <ellipse cx="1426" cy="676" rx="16" ry="19" fill="#fff" />
        <circle cx="1426" cy="688" r="15" fill="#b0b0b0" stroke="#fff" strokeWidth="3" />
        <path d="M1426 673V676M1426 687V690" stroke="#f00" strokeWidth="3" />
        <circle cx="1432" cy="646" r="2" fill="#222" />
        <g fill="#0f0">
          <circle cx="1490" cy="1312" r="16.500" />
          <circle cx="1462" cy="1333" r="16.500" />
          <circle cx="1453" cy="1363" r="16.500" />
          <circle cx="1465" cy="1374" r="16.500" />
          <circle cx="1487" cy="1384" r="16.500" />
          <circle cx="1470" cy="1406" r="19" />
        </g>
        <circle cx="1471" cy="1395" r="16" fill="#000" />
        <ellipse cx="1471" cy="1403" rx="17" ry="18" fill="#f00" />
      </g>
    </MapSvg>
  );
}

const actions = ["Add agent", "Remove agent", "Add simulator", "Remove simulator", "Add viewer", "Remove viewer", "Step", "Run"];
const tabs = [["World view", 100], ["Component manager", 169], ["Line of sight", 109], ["Score chart", 102], ["Score", 61]];
const checks = ["Overall", "Sqrt(building damage)", "Building damage", "Civilian component", "Civilians alive", "Civilian health (proportion)"];
const legend = [
  ["Overall", "#ff5555", 66, 0],
  ["Sqrt(building damage)", "#5555ff", 164, 0.23],
  ["Building damage", "#55ff55", 128, 0.15],
  ["Civilian component", "#ffff55", 141, 0.13],
  ["Civilians alive", "#ff55ff", 160, -0.06],
  ["Civilian health (proportion)", "#55ffff", 200, 0.18],
];
const sims = [
  "Collapse Simulator v1.1 (3): TCPConnectio",
  "Area model clear simulator (1): TCPConne",
  "misc.MiscSimulator (2): TCPConnection: lo",
  "Ignition simulator (4): TCPConnection: loc",
  "firesimulator.FireSimulatorWrapper (5): T",
  "traffic3.simulator.TrafficSimulator (6): TCP",
];

export default function App() {
  return (
    <Desktop>
      <Global />
      <TopBar>
        <BarGroup>
          <BarText>Atividades</BarText>
          <BarIcon $ml={20} width="16" height="16" viewBox="8 7 50 50">
            <rect x="9" y="8" width="48" height="48" rx="4" fill="#f4f4f4" />
            <JavaCup />
          </BarIcon>
          <BarText $ml={6}>rescuecore2-misc-WorkerThread</BarText>
          <BarIcon $ml={6} width="10" height="6" viewBox="0 0 10 6"><path d="M0 0H10L5 5z" fill="#dfdbd2" /></BarIcon>
        </BarGroup>
        <BarText $ml={70}>qua, 12 de set, 23:00</BarText>
        <BarGroup $end>
          <BarIcon width="16" height="14" viewBox="0 0 16 14" fill="none" stroke="#dfdbd2" strokeWidth="1.700">
            <path d="M1.500 4.500Q8-1.500 14.500 4.500" opacity=".45" />
            <path d="M3.500 6.500Q8 2.500 12.500 6.500M5.500 8.800Q8 6.800 10.500 8.800" />
            <circle cx="8" cy="11.500" r="1.700" fill="#dfdbd2" stroke="none" />
          </BarIcon>
          <BarIcon $ml={12} width="16" height="14" viewBox="0 0 16 14" fill="none" stroke="#dfdbd2" strokeWidth="1.400">
            <path d="M0 4.500H3L7 .5V13L3 9.500H0z" fill="#dfdbd2" stroke="none" />
            <path d="M9 4.500Q10.500 7 9 9.500M11 3Q13.300 7 11 11" />
            <path d="M13 1.500Q16.500 7 13 12.500" opacity=".45" />
          </BarIcon>
          <BarIcon $ml={13} width="12" height="17" viewBox="0 0 12 17" fill="none" stroke="#dfdbd2">
            <path d="M1 3H11V16H1z" strokeWidth="1.800" />
            <path d="M3.500 1.200H8.500" strokeWidth="2" />
            <path d="M3 6.500H9M3 9H9M3 11.500H9M3 13.500H9" strokeWidth="1.300" />
          </BarIcon>
          <BarText $ml={7} $size={12} $ls={0}>83 %</BarText>
          <BarIcon $ml={6} width="10" height="6" viewBox="0 0 10 6"><path d="M0 0H10L5 5z" fill="#dfdbd2" /></BarIcon>
        </BarGroup>
      </TopBar>

      <Below>
        <Dock>
          <Rocks />
          <DockItem><Chrome /></DockItem>
          <DockItem><Files /></DockItem>
          <DockItem><Terminal /></DockItem>
          <DockItem><Eclipse /></DockItem>
          <DockItem><Notes /></DockItem>
          <DockItem><JavaTile /></DockItem>
          <DockItem $active><JavaTile /></DockItem>
          <DockSpacer />
          <AppsButton><Apps /></AppsButton>
        </Dock>

        <Workspace>
          <Window $x={0} $y={0} $w={1853} $h={1053}>
            <TitleBar $h={52} $pr={5} $pb={24}>
              <Control kind="min" /><Control kind="wide" /><Control kind="close" />
            </TitleBar>
            <IdeBody>
              <IdeToolbar>
                <svg width="52" height="32" viewBox="0 0 52 32">
                  <path d="M8.500 1V31" stroke="#b0b0b0" />
                  <path d="M3.500 4V30" stroke="#b0b0b0" strokeDasharray="2 2.500" />
                  <rect x="16.500" y="11.500" width="11" height="11" fill="#e8f3fb" stroke="#5b8fb5" />
                  <path d="M16 13H24" stroke="#3b87c4" strokeWidth="3" />
                  <path d="M20.500 14V22M17 18.500H27" stroke="#7d6a35" />
                  <path d="M26 7l1.500 3 3 1.500-3 1.500-1.500 3-1.500-3-3-1.500 3-1.500z" fill="#fff6c8" stroke="#c08a1c" />
                  <path d="M37 8H44V16H37zM40.500 6V18M35 11.500H46" stroke="#7a3b1e" fill="none" strokeWidth="1.500" />
                  <path d="M50 7V12Q50 16 46 16" stroke="#3d7cb8" strokeWidth="3" fill="none" />
                  <circle cx="38" cy="17" r="4" fill="#2f9e44" />
                  <circle cx="43.500" cy="20" r="3.200" fill="#5c4aa8" />
                </svg>
              </IdeToolbar>
              <IdeRow>
                <Editor>
                  <EditorTabs>
                    <svg width="9" height="9" viewBox="0 0 9 9" fill="none" stroke="#000">
                      <path d="M3 1H8V5H6M3 3V1M.7 4H5.500V8H.7z" strokeWidth="1.300" />
                    </svg>
                  </EditorTabs>
                  <EditorRule />
                </Editor>
                <TrimStack>
                  <svg width="25" height="52" viewBox="0 0 25 52">
                    <path d="M6 6.500H19" stroke="#9a9a9a" strokeWidth="1.500" strokeDasharray="2 1.700" />
                    <path d="M12 17H17V20.500H15M12 19V17M9.700 20.500H14.500V24H9.700z" fill="none" stroke="#6b625a" strokeWidth="1.200" />
                    <rect x="7.500" y="32.500" width="11" height="11" fill="#eef8fe" stroke="#82733f" />
                    <path d="M7 33.500H19" stroke="#3b87c4" strokeWidth="2" />
                    <path d="M11 35V43" stroke="#a8a48f" />
                  </svg>
                </TrimStack>
              </IdeRow>
            </IdeBody>
          </Window>

          <Window $x={0} $y={1} $w={1796} $h={656} $shadow>
            <TitleBar $h={29} $pr={6}>
              <TitleText $pad={65} $ls={0.4}>Kernel GUI</TitleText>
              <Control kind="min" /><Control kind="max" /><Control kind="close" />
            </TitleBar>
            <KernelBody>
              <ButtonColumn>
                {actions.map((a) => <SwingButton key={a} $focus={a === "Run"}>{a}</SwingButton>)}
              </ButtonColumn>
              <TabbedPane>
                <TabStrip>
                  {tabs.map(([t, w]) => <TabCell key={t} $w={w} $on={t === "Score chart"}>{t}</TabCell>)}
                </TabStrip>
                <Pane>
                  <ChartCard>
                    <Chart />
                    <Legend>
                      {legend.map(([t, c, w, ls]) => <LegendItem key={t} $c={c} $w={w} $ls={ls}>{t}</LegendItem>)}
                    </Legend>
                  </ChartCard>
                  <CheckList>
                    {checks.map((c) => (
                      <CheckRow key={c}>
                        <CheckBox>
                          <svg width="11" height="11" viewBox="0 0 11 11"><path d="M2 4H4V6.500L8.500 2.200V4.500L4 9H2z" fill="#222" /></svg>
                        </CheckBox>
                        <CheckText>{c}</CheckText>
                      </CheckRow>
                    ))}
                  </CheckList>
                </Pane>
              </TabbedPane>
              <Side>
                <StatusRow>
                  <Status $w={109} $ls={0.3}>Time: 301</Status>
                  <Status $w={149} $ls={-0.05}>Score: 15.49389879...</Status>
                </StatusRow>
                <Titled $h={203} $mb={1}>
                  <Legendary>Agents</Legendary>
                  <ScrollGrid $v $rows="165px 17px">
                    <List>
                      {Array.from({ length: 10 }, (_, i) => <ListRow key={i} $ls={0.3}>sample.SampleCivilian: urn:rescuecore</ListRow>)}
                    </List>
                    <ScrollBar v len={24} />
                    <ScrollBar len={101} />
                  </ScrollGrid>
                </Titled>
                <Titled $h={203} $mb={1}>
                  <Legendary>Simulators</Legendary>
                  <ScrollGrid $rows="165px 17px">
                    <List>{sims.map((s) => <ListRow key={s}>{s}</ListRow>)}</List>
                    <ScrollBar len={106} />
                  </ScrollGrid>
                </Titled>
                <Titled $h={204} $open>
                  <Legendary>Viewers</Legendary>
                  <ScrollGrid $rows="182px">
                    <List><ListRow $ls={0.26}>sample.SampleViewer (7): TCPConnection</ListRow></List>
                  </ScrollGrid>
                </Titled>
              </Side>
            </KernelBody>
          </Window>

          <Window $x={945} $y={499} $w={908} $h={554} $shadow>
            <TitleBar $h={30} $pr={6} $focused>
              <TitleText $pad={64} $ls={0.25} $focused>Viewer 7 (145 entities)</TitleText>
              <Control kind="min" tone="live" /><Control kind="max" tone="live" /><Control kind="close" tone="close" />
            </TitleBar>
            <ViewerLabels>
              <ViewerLabel $w={208} $ls={0.12}>Time: 301</ViewerLabel>
              <ViewerLabel $w={184} $ls={0.1}>Score: 15,494</ViewerLabel>
              <ViewerLabel $w={227}>test (350) | 3 channels</ViewerLabel>
            </ViewerLabels>
            <CityMap />
          </Window>
        </Workspace>
      </Below>
    </Desktop>
  );
}
